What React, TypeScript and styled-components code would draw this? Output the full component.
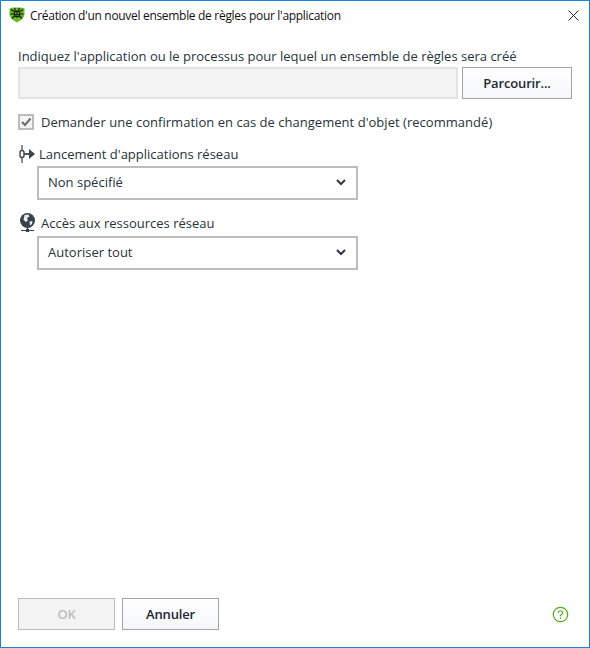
import React from "react";
import styled, { createGlobalStyle } from "styled-components";

const Global = createGlobalStyle`
  html, body { margin: 0; padding: 0; background: #fff; }
  #root { width: 590px; height: 648px; }
`;

const Window = styled.div`
  box-sizing: border-box;
  width: 590px;
  height: 648px;
  border: 1px solid #1883d7;
  background: #fff;
  display: flex;
  flex-direction: column;
  font-family: "Open Sans", "Noto Sans", sans-serif;
  font-size: 13px;
  color: #26323c;
`;

const TitleBar = styled.div`
  box-sizing: border-box;
  height: 30px;
  display: flex;
  align-items: center;
  padding: 0 10px 2px 8px;
  gap: 5px;
`;

const Title = styled.div`
  flex: 1;
  font-size: 12px;
  letter-spacing: -0.31px;
  color: #111;
`;

const Body = styled.div`
  flex: 1;
  display: flex;
  flex-direction: column;
  padding: 15px 17px 17px 17px;
`;

const Prompt = styled.div`
  height: 20px;
  line-height: 20px;
`;

const PathRow = styled.div`
  display: flex;
  gap: 4px;
  margin-top: 1px;
`;

const PathInput = styled.div`
  box-sizing: border-box;
  width: 440px;
  height: 32px;
  background: #f3f3f3;
  border: 2px solid #e3e3e3;
`;

const Button = styled.div<{ $width: number; $disabled?: boolean }>`
  box-sizing: border-box;
  width: ${(p) => p.$width}px;
  height: 32px;
  display: flex;
  align-items: center;
  justify-content: center;
  font-weight: 600;
  letter-spacing: -0.15px;
  border: ${(p) => (p.$disabled ? "1px solid #bcbcbc" : "1px solid #a3a3a3")};
  background: ${(p) => (p.$disabled ? "#f3f3f3" : "linear-gradient(#ffffff, #f5f7fa)")};
  color: ${(p) => (p.$disabled ? "#bdbdbd" : "#1c2833")};
`;

const CheckRow = styled.div`
  display: flex;
  align-items: center;
  gap: 7px;
  margin-top: 15px;
  height: 16px;
  letter-spacing: 0.03px;
`;

const CheckBox = styled.div`
  box-sizing: border-box;
  width: 16px;
  height: 16px;
  border: 2px solid #bcbcbc;
  background: #f3f3f3;
  display: flex;
  align-items: center;
  justify-content: center;
`;

const FieldLabel = styled.div<{ $top: number; $gap: number }>`
  display: flex;
  align-items: center;
  gap: ${(p) => p.$gap}px;
  height: 20px;
  margin-top: ${(p) => p.$top}px;
`;

const Select = styled.div<{ $top: number }>`
  box-sizing: border-box;
  width: 321px;
  height: 34px;
  margin: ${(p) => p.$top}px 0 0 19px;
  border: 2px solid #bcbcbc;
  background: #fff;
  display: flex;
  align-items: center;
  justify-content: space-between;
  padding: 0 10px 2px 9px;
`;

const Footer = styled.div`
  margin-top: auto;
  display: flex;
  align-items: center;
  gap: 7px;
`;

const HelpIcon = styled.div`
  margin-left: auto;
  margin-right: 3px;
  display: flex;
`;

const Shield = () => (
  <svg width="16" height="16" viewBox="0 0 16 16">
    <path d="M0.5 1.5 L4 0.5 H12 L15.5 1.5 V7 C15.5 11 11 14 8 15.5 C5 14 0.5 11 0.5 7 Z" fill="#66bb1e" />
    <ellipse cx="8" cy="7" rx="3.2" ry="3.4" fill="#101a0a" />
    <g stroke="#101a0a" strokeWidth="1.1" fill="none">
      <path d="M5.5 4.8 L2 2.5 M10.5 4.8 L14 2.5 M5 7 H1.5 M11 7 H14.5 M5.5 9 L3 11.5 M10.5 9 L13 11.5 M6.5 3.8 L5.5 1 M9.5 3.8 L10.5 1" />
    </g>
    <circle cx="6.8" cy="6" r="0.8" fill="#cde89a" />
    <circle cx="9.2" cy="6" r="0.8" fill="#cde89a" />
    <path d="M6 8.3 H10" stroke="#7fbf3a" strokeWidth="0.6" />
  </svg>
);

const CloseIcon = () => (
  <svg width="11" height="11" viewBox="0 0 11 11">
    <path d="M0.5 0.5 L10.5 10.5 M10.5 0.5 L0.5 10.5" stroke="#222" strokeWidth="1" fill="none" />
  </svg>
);

const Check = () => (
  <svg width="12" height="12" viewBox="0 0 12 12">
    <path d="M2 6 L5 9 L10.5 2.5" stroke="#6b6b6b" strokeWidth="2" fill="none" />
  </svg>
);

const RunIcon = () => (
  <svg width="17" height="20" viewBox="0 0 17 20">
    <path d="M4 1 V19" stroke="#3a4650" strokeWidth="1.2" />
    <rect x="2" y="6.5" width="4" height="7" rx="2" fill="#fff" stroke="#3a4650" strokeWidth="1.4" />
    <path d="M6 10 H12" stroke="#3a4650" strokeWidth="1.8" />
    <path d="M11 5 L17 10 L11 15 Z" fill="#3a4650" />
  </svg>
);

const GlobeIcon = () => (
  <svg width="18" height="20" viewBox="0 0 18 20">
    <circle cx="9.5" cy="7.5" r="7.5" fill="#36424c" />
    <path d="M6.5 2 L10.5 1.5 L11.5 3.5 L9 5 L10 7.5 L7.5 9 L5.5 6.5 Z M11.5 8.5 L14.5 8 L14 11 L12 12.5 Z" fill="#e8ecef" />
    <path d="M9.5 14 V17" stroke="#36424c" strokeWidth="1.4" />
    <path d="M3 17.5 H16" stroke="#36424c" strokeWidth="1.1" />
    <rect x="8" y="16" width="3" height="3" fill="#36424c" />
  </svg>
);

const Chevron = () => (
  <svg width="10" height="7" viewBox="0 0 10 7">
    <path d="M1 1 L5 5 L9 1" stroke="#2b3a46" strokeWidth="2" fill="none" />
  </svg>
);

const Help = () => (
  <svg width="17" height="17" viewBox="0 0 17 17">
    <circle cx="8.5" cy="8.5" r="7.2" stroke="#52a81a" strokeWidth="1.2" fill="none" />
    <path d="M6.3 6.7 C6.3 4.1 10.7 4.1 10.7 6.7 C10.7 8.3 8.5 8.3 8.5 10.2" stroke="#52a81a" strokeWidth="1.2" fill="none" />
    <rect x="7.9" y="11.4" width="1.2" height="1.3" fill="#52a81a" />
  </svg>
);

export default function App() {
  return (
    <Window>
      <Global />
      <TitleBar>
        <Shield />
        <Title>Création d'un nouvel ensemble de règles pour l'application</Title>
        <CloseIcon />
      </TitleBar>
      <Body>
        <Prompt>Indiquez l'application ou le processus pour lequel un ensemble de règles sera créé</Prompt>
        <PathRow>
          <PathInput />
          <Button $width={110}>Parcourir...</Button>
        </PathRow>
        <CheckRow>
          <CheckBox><Check /></CheckBox>
          Demander une confirmation en cas de changement d'objet (recommandé)
        </CheckRow>
        <FieldLabel $top={14} $gap={4}>
          <RunIcon />
          Lancement d'applications réseau
        </FieldLabel>
        <Select $top={2}>
          Non spécifié
          <Chevron />
        </Select>
        <FieldLabel $top={13} $gap={5}>
          <GlobeIcon />
          Accès aux ressources réseau
        </FieldLabel>
        <Select $top={3}>
          Autoriser tout
          <Chevron />
        </Select>
        <Footer>
          <Button $width={97} $disabled>OK</Button>
          <Button $width={97}>Annuler</Button>
          <HelpIcon><Help /></HelpIcon>
        </Footer>
      </Body>
    </Window>
  );
}
